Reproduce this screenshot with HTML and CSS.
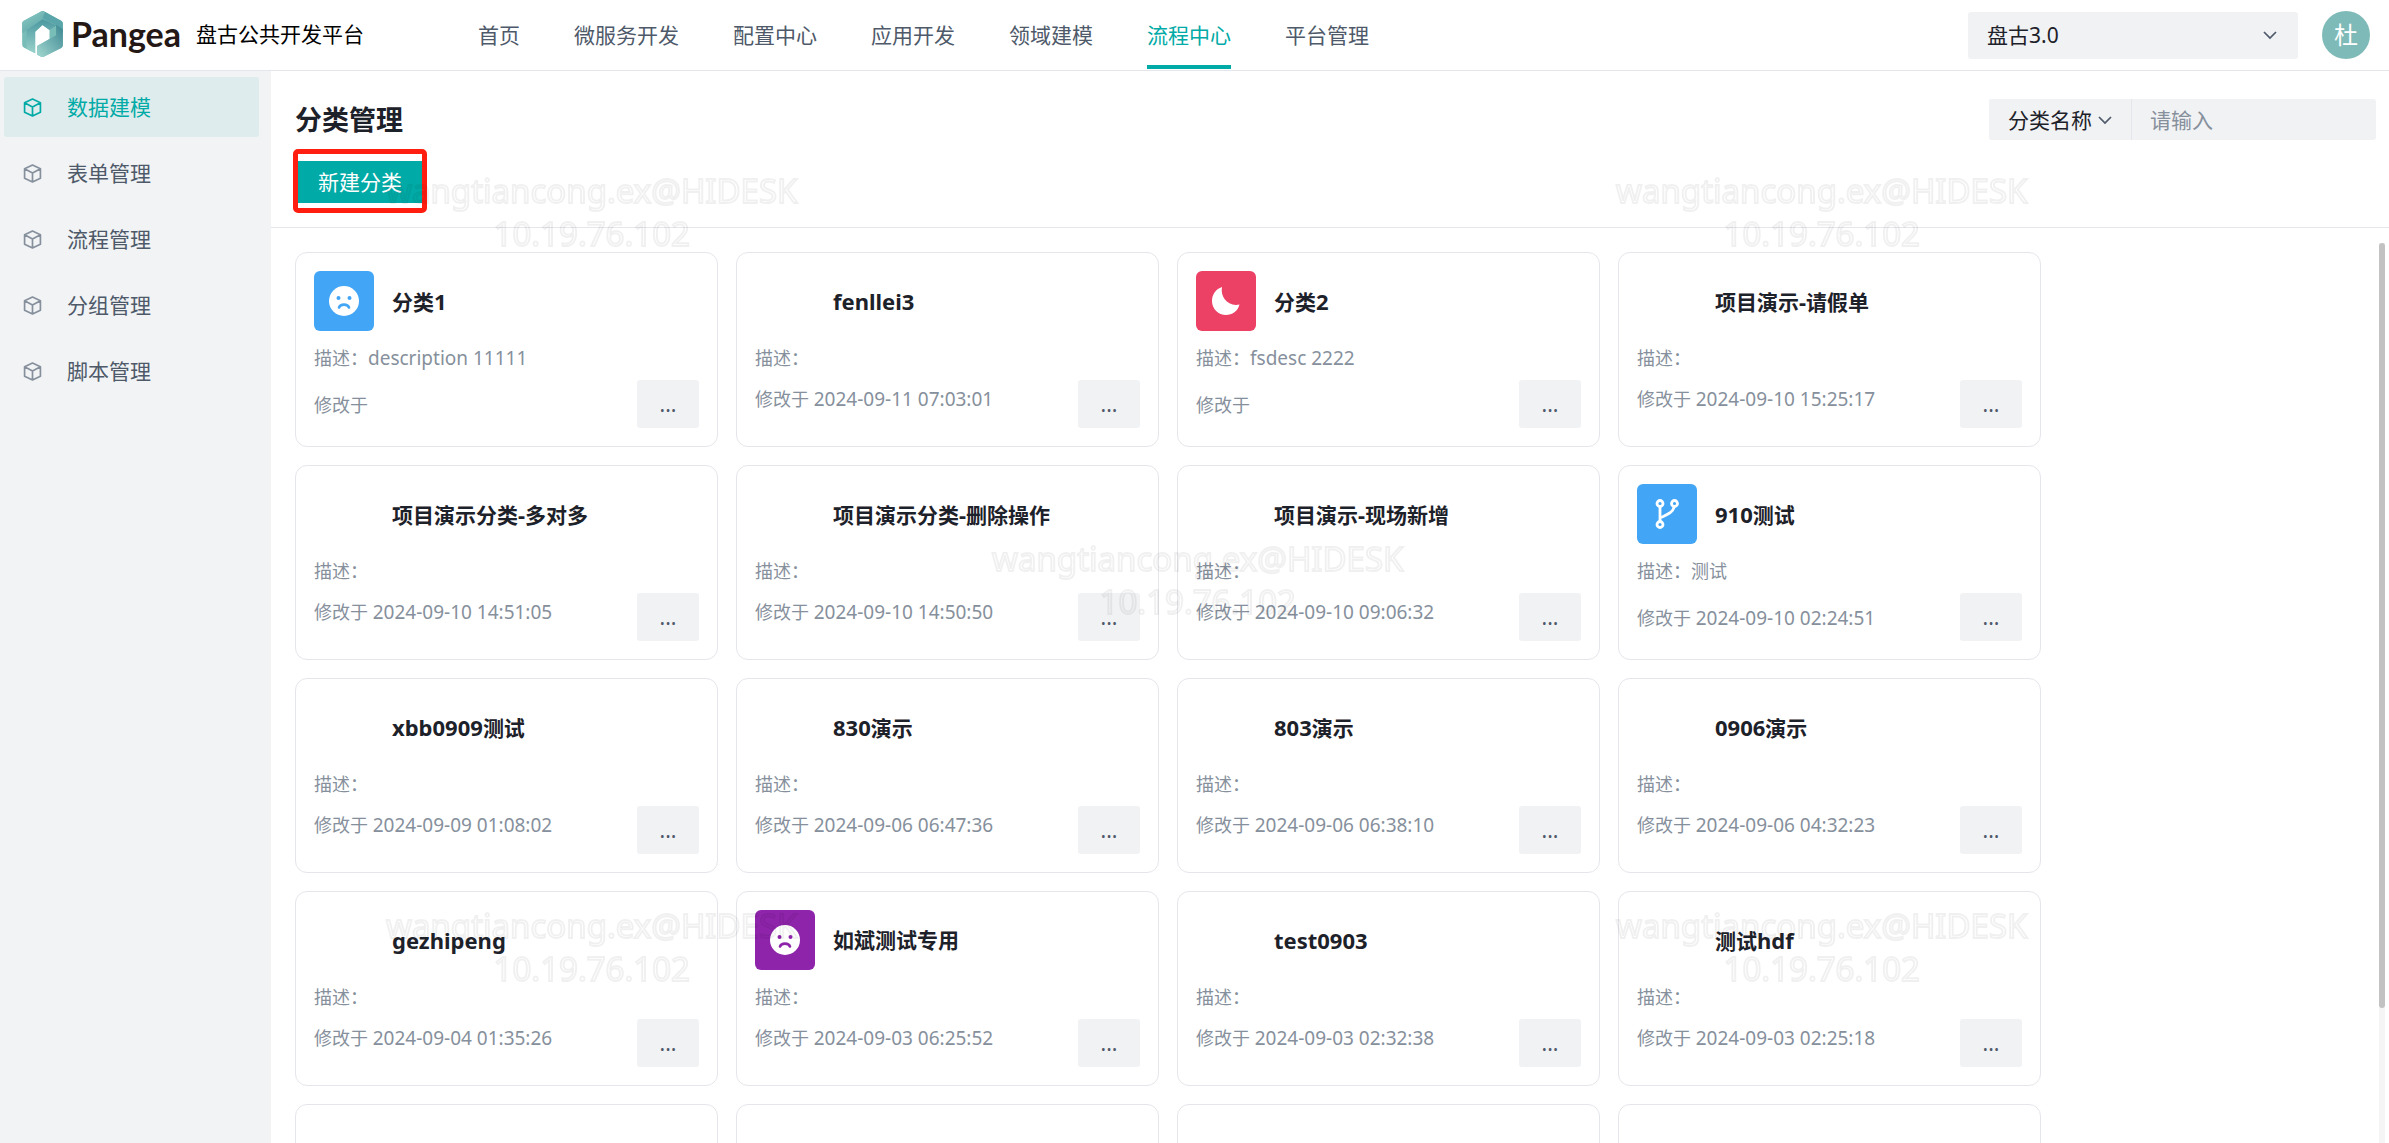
FILE: index.html
```html
<!DOCTYPE html>
<html lang="zh-CN">
<head>
<meta charset="utf-8">
<title>盘古公共开发平台 - 分类管理</title>
<link rel="stylesheet" href="styles.css">
</head>
<body>
<svg class="defs" aria-hidden="true">
  <symbol id="cube" viewBox="0 0 18 18"><path d="M9 1 16.500 4.500V13.500L9 17 1.500 13.500V4.500ZM1.500 4.500 9 8.500 16.500 4.500M9 8.500V17" fill="none" stroke="currentColor" stroke-width="1.600" stroke-linejoin="round"/></symbol>
  <symbol id="chevron" viewBox="0 0 14 14"><path d="M1 4 7 10 13 4" fill="none" stroke="currentColor" stroke-width="1.700"/></symbol>
  <symbol id="sad" viewBox="0 0 30 30"><circle cx="15" cy="15" r="15" fill="#fff"/><circle cx="9.500" cy="12" r="2" fill="currentColor"/><circle cx="20.500" cy="12" r="2" fill="currentColor"/><path d="M10 21.500C11.500 17.700 18.500 17.700 20 21.500" fill="none" stroke="currentColor" stroke-width="2.600" stroke-linecap="round"/></symbol>
  <symbol id="moon" viewBox="0 0 30 30"><path d="M11 1C9 11 17 21 28.500 18.500C27 25 21 29 15 29C7.500 29 1 23 1 15C1 8.500 5 3 11 1Z" fill="#fff"/></symbol>
  <symbol id="branch" viewBox="0 0 30 30"><g fill="none" stroke="#fff" stroke-width="2.800"><circle cx="8" cy="4.500" r="3"/><circle cx="22.500" cy="4.500" r="3"/><circle cx="8" cy="25.500" r="3"/><path d="M8 8V22M22 8C21 14 14 16 8 19"/></g></symbol>
</svg>

<header class="topbar">
  <a class="brand" href="#">
    <svg class="brand-mark" viewBox="36 33 122 138" aria-hidden="true">
      <defs>
        <linearGradient id="g1" x1="0" y1="0" x2="1" y2="1"><stop offset="0" stop-color="#8ccac3"/><stop offset="1" stop-color="#4e9aa0"/></linearGradient>
        <linearGradient id="g2" x1="0" y1="0" x2="0" y2="1"><stop offset="0" stop-color="#4b98a0"/><stop offset="1" stop-color="#9ad2cb"/></linearGradient>
        <linearGradient id="g3" x1="1" y1="0" x2="0" y2="1"><stop offset="0" stop-color="#3c8692"/><stop offset="1" stop-color="#a2d8d0"/></linearGradient>
      </defs>
      <path d="M97 33Q101 33 105 36L153 62Q158 65 158 70V136Q158 141 153 144L105 168Q97 173 90 169L81 164V138L118 117V90L97 75 75 95V160L42 143Q36 140 36 134V70Q36 65 41 62L90 36Q94 33 97 33Z" fill="#79bdb9"/>
      <path d="M97 33Q94 33 90 36L41 62Q36 65 36 70V100L97 58 118 70 138 58 105 36Q101 33 97 33Z" fill="url(#g1)"/>
      <path d="M97 58 49 90V146L75 160V95L97 75 118 90 138 76Z" fill="url(#g2)"/>
      <path d="M105 36 153 62Q158 65 158 70V100L138 117V76L97 54Z" fill="#5aa5a9"/>
      <path d="M118 90 138 76V106L81 138V164L90 169Q97 173 105 168L153 144Q158 141 158 136V88L138 74Z" fill="url(#g3)"/>
    </svg>
    <span class="brand-word">Pangea</span>
    <span class="brand-name">盘古公共开发平台</span>
  </a>
  <nav class="topnav">
    <a href="#">首页</a><a href="#">微服务开发</a><a href="#">配置中心</a><a href="#">应用开发</a><a href="#">领域建模</a><a href="#" class="on">流程中心</a><a href="#">平台管理</a>
  </nav>
  <div class="account">
    <label class="picker project"><select aria-label="项目"><option>盘古3.0</option></select><svg><use href="#chevron"/></svg></label>
    <button class="avatar" type="button">杜</button>
  </div>
</header>

<div class="shell">
  <aside class="side">
    <a href="#" class="on"><svg><use href="#cube"/></svg>数据建模</a>
    <a href="#"><svg><use href="#cube"/></svg>表单管理</a>
    <a href="#"><svg><use href="#cube"/></svg>流程管理</a>
    <a href="#"><svg><use href="#cube"/></svg>分组管理</a>
    <a href="#"><svg><use href="#cube"/></svg>脚本管理</a>
  </aside>

  <main class="main">
    <div class="page-head">
      <div class="title-row">
        <h1>分类管理</h1>
        <div class="search">
          <label class="picker field"><select aria-label="搜索字段"><option>分类名称</option></select><svg><use href="#chevron"/></svg></label>
          <input type="text" placeholder="请输入" aria-label="搜索内容">
        </div>
      </div>
      <div class="highlight"><button class="create" type="button">新建分类</button></div>
    </div>

    <div class="scroller">
      <div class="cards">
        <article class="card described"><div class="card-head"><span class="tile blue"><svg><use href="#sad"/></svg></span><h2>分类<span class="latin">1</span></h2></div><p>描述：<span class="latin">description 11111</span></p><div class="card-foot"><span>修改于</span><button type="button">...</button></div></article>
        <article class="card"><div class="card-head"><span class="tile"></span><h2><span class="latin">fenllei3</span></h2></div><p>描述：</p><div class="card-foot"><span>修改于 <time>2024-09-11 07:03:01</time></span><button type="button">...</button></div></article>
        <article class="card described"><div class="card-head"><span class="tile red"><svg><use href="#moon"/></svg></span><h2>分类<span class="latin">2</span></h2></div><p>描述：<span class="latin">fsdesc 2222</span></p><div class="card-foot"><span>修改于</span><button type="button">...</button></div></article>
        <article class="card"><div class="card-head"><span class="tile"></span><h2>项目演示<span class="latin">-</span>请假单</h2></div><p>描述：</p><div class="card-foot"><span>修改于 <time>2024-09-10 15:25:17</time></span><button type="button">...</button></div></article>

        <article class="card"><div class="card-head"><span class="tile"></span><h2>项目演示分类<span class="latin">-</span>多对多</h2></div><p>描述：</p><div class="card-foot"><span>修改于 <time>2024-09-10 14:51:05</time></span><button type="button">...</button></div></article>
        <article class="card"><div class="card-head"><span class="tile"></span><h2>项目演示分类<span class="latin">-</span>删除操作</h2></div><p>描述：</p><div class="card-foot"><span>修改于 <time>2024-09-10 14:50:50</time></span><button type="button">...</button></div></article>
        <article class="card"><div class="card-head"><span class="tile"></span><h2>项目演示<span class="latin">-</span>现场新增</h2></div><p>描述：</p><div class="card-foot"><span>修改于 <time>2024-09-10 09:06:32</time></span><button type="button">...</button></div></article>
        <article class="card described"><div class="card-head"><span class="tile blue"><svg><use href="#branch"/></svg></span><h2><span class="latin">910</span>测试</h2></div><p>描述：测试</p><div class="card-foot"><span>修改于 <time>2024-09-10 02:24:51</time></span><button type="button">...</button></div></article>

        <article class="card"><div class="card-head"><span class="tile"></span><h2><span class="latin">xbb0909</span>测试</h2></div><p>描述：</p><div class="card-foot"><span>修改于 <time>2024-09-09 01:08:02</time></span><button type="button">...</button></div></article>
        <article class="card"><div class="card-head"><span class="tile"></span><h2><span class="latin">830</span>演示</h2></div><p>描述：</p><div class="card-foot"><span>修改于 <time>2024-09-06 06:47:36</time></span><button type="button">...</button></div></article>
        <article class="card"><div class="card-head"><span class="tile"></span><h2><span class="latin">803</span>演示</h2></div><p>描述：</p><div class="card-foot"><span>修改于 <time>2024-09-06 06:38:10</time></span><button type="button">...</button></div></article>
        <article class="card"><div class="card-head"><span class="tile"></span><h2><span class="latin">0906</span>演示</h2></div><p>描述：</p><div class="card-foot"><span>修改于 <time>2024-09-06 04:32:23</time></span><button type="button">...</button></div></article>

        <article class="card"><div class="card-head"><span class="tile"></span><h2><span class="latin">gezhipeng</span></h2></div><p>描述：</p><div class="card-foot"><span>修改于 <time>2024-09-04 01:35:26</time></span><button type="button">...</button></div></article>
        <article class="card"><div class="card-head"><span class="tile purple"><svg><use href="#sad"/></svg></span><h2>如斌测试专用</h2></div><p>描述：</p><div class="card-foot"><span>修改于 <time>2024-09-03 06:25:52</time></span><button type="button">...</button></div></article>
        <article class="card"><div class="card-head"><span class="tile"></span><h2><span class="latin">test0903</span></h2></div><p>描述：</p><div class="card-foot"><span>修改于 <time>2024-09-03 02:32:38</time></span><button type="button">...</button></div></article>
        <article class="card"><div class="card-head"><span class="tile"></span><h2>测试<span class="latin">hdf</span></h2></div><p>描述：</p><div class="card-foot"><span>修改于 <time>2024-09-03 02:25:18</time></span><button type="button">...</button></div></article>

        <article class="card"></article>
        <article class="card"></article>
        <article class="card"></article>
        <article class="card"></article>
      </div>
      <div class="track"><div class="thumb"></div></div>
    </div>
  </main>
</div>

<div class="marks" aria-hidden="true">
  <div class="mark a">wangtiancong.ex@HIDESK<br>10.19.76.102</div>
  <div class="mark b">wangtiancong.ex@HIDESK<br>10.19.76.102</div>
  <div class="mark c">wangtiancong.ex@HIDESK<br>10.19.76.102</div>
  <div class="mark d">wangtiancong.ex@HIDESK<br>10.19.76.102</div>
  <div class="mark e">wangtiancong.ex@HIDESK<br>10.19.76.102</div>
</div>
</body>
</html>
```
FILE: styles.css
```css
* { box-sizing: border-box; }

body {
  margin: 0;
  height: 100vh;
  overflow: hidden;
  display: flex;
  flex-direction: column;
  background: #fff;
  color: #1d2129;
  font: 21px/32px "Noto Sans", "Noto Sans CJK SC", sans-serif;
}

a { color: inherit; text-decoration: none; }
button, input, select { font: inherit; color: inherit; border: 0; margin: 0; padding: 0; outline: 0; }
h1, h2, p { margin: 0; }
.defs { display: none; }

/* top bar */
.topbar {
  flex: none;
  height: 71px;
  border-bottom: 1px solid #e5e6eb;
  display: flex;
  padding: 0 19px 0 22px;
}
.brand { display: flex; align-items: center; color: #000; width: 456px; padding-bottom: 2px; }
.brand-mark { width: 41px; height: 46px; margin-right: 8px; }
.brand-word { font: 700 34px/44px Lato, sans-serif; color: #231815; width: 125px; }
.topnav { display: flex; gap: 54px; color: #4e5969; }
.topnav a { height: 69px; line-height: 70px; }
.topnav .on { color: #00aaa6; border-bottom: 4px solid #00aaa6; }
.account { margin-left: auto; display: flex; align-items: center; gap: 24px; }

.picker { position: relative; display: flex; align-items: center; background: #f1f2f4; }
.picker select { appearance: none; background: transparent; height: 100%; width: 100%; }
.picker svg { position: absolute; width: 14px; height: 14px; color: #4e5969; pointer-events: none; }
.project { width: 330px; height: 47px; border-radius: 3px; }
.project select { padding-left: 19px; }
.project svg { right: 21px; }
.avatar { width: 48px; height: 48px; border-radius: 50%; background: #7ebab8; color: #fff; font-size: 24px; }

/* layout */
.shell { flex: 1; min-height: 0; display: flex; }
.side {
  width: 271px;
  flex: none;
  background: #f1f3f5;
  padding: 6px 12px 0 4px;
  display: flex;
  flex-direction: column;
  gap: 6px;
  color: #4e5969;
}
.side a { height: 60px; display: flex; align-items: center; padding-left: 19px; gap: 25px; border-radius: 3px; }
.side svg { width: 19px; height: 19px; color: #86909c; }
.side .on { background: #dfeced; color: #00aaa6; }
.side .on svg { color: #00aaa6; }

.main { flex: 1; min-width: 0; display: flex; flex-direction: column; }
.page-head { flex: none; height: 157px; border-bottom: 1px solid #e5e6eb; padding: 28px 13px 0 24px; }
.title-row { display: flex; justify-content: space-between; align-items: center; height: 41px; }
h1 { font-size: 27px; font-weight: 700; }
.search { display: flex; height: 41px; background: #f1f2f4; border-radius: 3px; }
.field { width: 143px; border-right: 1px solid #e5e6eb; border-radius: 3px 0 0 3px; }
.field select { padding-left: 19px; }
.field svg { right: 19px; }
.search input { width: 244px; background: transparent; padding-left: 18px; }
.search input::placeholder { color: #86909c; }

.highlight {
  width: 134px;
  height: 64px;
  margin: 9px 0 0 -2px;
  padding-top: 2px;
  border: 5px solid #ff1e10;
  border-radius: 5px;
  display: flex;
  align-items: center;
}
.create { width: 100%; height: 42px; background: #00aaa6; color: #fff; }

/* category cards */
.scroller { flex: 1; min-height: 0; overflow: hidden; display: flex; padding: 0 4px 0 24px; }
.cards {
  flex: 1;
  display: grid;
  grid-template-columns: repeat(auto-fill, 423px);
  grid-auto-rows: 195px;
  gap: 18px;
  padding-top: 24px;
}
.track { width: 6px; margin-top: 15px; background: #f5f5f5; }
.thumb { height: 85%; border-radius: 3px; background: #c2c2c2; }

.card { border: 1px solid #e5e6eb; border-radius: 12px; padding: 18px; color: #86909c; font-size: 18px; line-height: 28px; }
.card-head { display: flex; align-items: center; gap: 18px; height: 60px; }
.card h2 { font-size: 21px; line-height: 32px; font-weight: 700; color: #1d2129; }
.card h2 .latin { font-size: 22px; }
.card p { margin-top: 13px; height: 28px; }
.card p .latin, .card time { font-size: 19px; }
.tile { width: 60px; height: 60px; border-radius: 6px; display: flex; align-items: center; justify-content: center; }
.tile svg { width: 30px; height: 30px; }
.blue { background: #42a5f5; color: #42a5f5; }
.red { background: #ec4065; }
.purple { background: #8e24aa; color: #8e24aa; }
.card-foot { display: flex; justify-content: space-between; margin-top: 8px; }
.card-foot > span { padding-top: 5px; }
.described .card-foot > span { padding-top: 11px; }
.card-foot button { width: 62px; height: 48px; border-radius: 3px; background: #f1f2f4; color: #4e5969; font-size: 21px; }

/* user watermark over the page */
.marks { position: fixed; inset: 0; pointer-events: none; }
.mark {
  position: absolute;
  text-align: center;
  white-space: nowrap;
  font: 33px/43px "Noto Sans", sans-serif;
  color: transparent;
  -webkit-text-stroke: 2px rgba(0, 0, 0, 0.06);
}
.a { left: 386px; top: 169px; }
.b { left: 1616px; top: 169px; }
.c { left: 992px; top: 537px; }
.d { left: 386px; top: 904px; }
.e { left: 1616px; top: 904px; }
```
